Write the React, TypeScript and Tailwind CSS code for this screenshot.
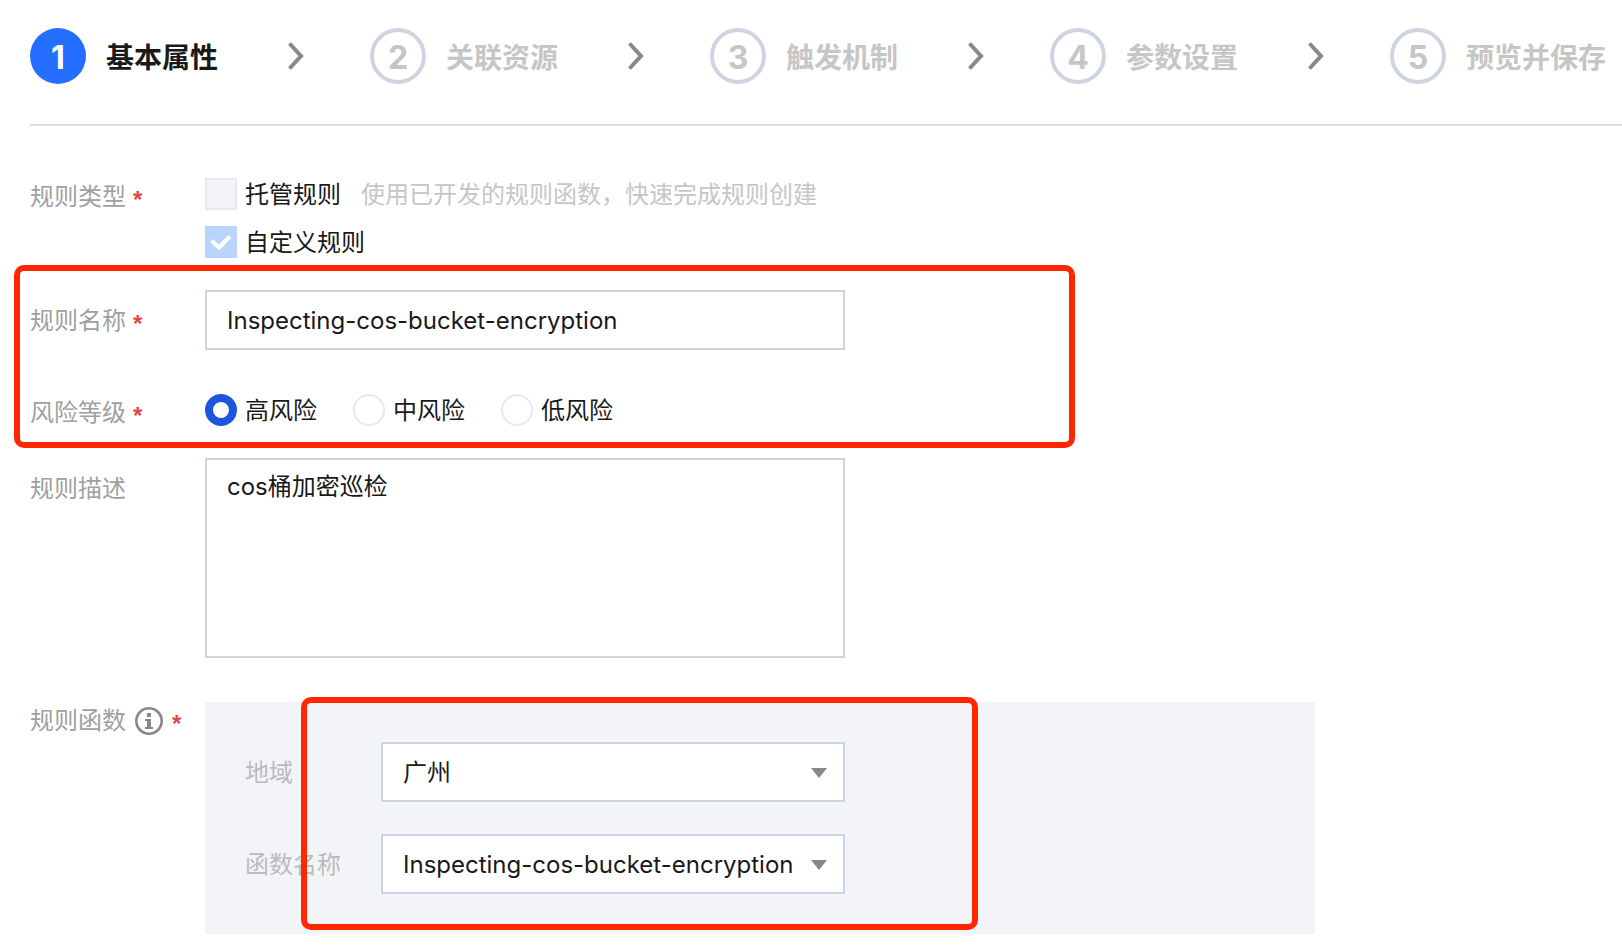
import { useState } from "react";
import type { ReactNode } from "react";

const steps = ["基本属性", "关联资源", "触发机制", "参数设置", "预览并保存"];
const risks = ["高风险", "中风险", "低风险"];

function Chevron() {
  return (
    <svg className="ml-[70px] mr-[66px] h-7 w-4 shrink-0" viewBox="0 0 16 28" aria-hidden="true">
      <path d="M1.5 1.5 L13 14 L1.5 26.5" fill="none" stroke="#888888" strokeWidth="4" />
    </svg>
  );
}

function Steps() {
  return (
    <ol className="flex items-center overflow-hidden border-b-2 border-[#dddddd] pt-7 pb-10">
      {steps.map((name, i) => (
        <li key={name} className="flex shrink-0 items-center" aria-current={i === 0 ? "step" : undefined}>
          <span
            className={
              i === 0
                ? "flex size-14 items-center justify-center rounded-full bg-[#246fff] pt-1 text-[32px] font-bold text-white"
                : "flex size-14 items-center justify-center rounded-full border-4 border-[#cfd5e0] pt-1 text-[32px] font-bold text-[#c6c6c6]"
            }
          >
            {i + 1}
          </span>
          <span
            className={
              i === 0
                ? "ml-5 pt-1 text-[28px] leading-10 font-bold text-[#191919]"
                : "ml-5 pt-1 text-[28px] leading-10 font-bold text-[#c6c6c6]"
            }
          >
            {name}
          </span>
          {i < steps.length - 1 && <Chevron />}
        </li>
      ))}
    </ol>
  );
}

function Star() {
  return (
    <span className="ml-[7px] pt-1.5 font-['Liberation_Sans',sans-serif] leading-6 font-bold text-[#e54545]">*</span>
  );
}

function InfoIcon() {
  return (
    <svg className="mr-0.5 ml-[9px] size-7" viewBox="0 0 28 28" aria-hidden="true">
      <circle cx="14" cy="14" r="12.7" fill="none" stroke="#888888" strokeWidth="2.6" />
      <path d="M12 6h4v4h-4z M10 12h6v8h2v2h-8v-2h2v-6h-2z" fill="#888888" />
    </svg>
  );
}

function CheckBox({ id, label, checked, hint }: { id: string; label: string; checked: boolean; hint?: string }) {
  return (
    <div className="flex h-8 items-center">
      <span className="relative size-8">
        <input
          id={id}
          type="checkbox"
          disabled
          checked={checked}
          readOnly
          className="block size-8 appearance-none border-2 border-[#e5e8f0] bg-[#f3f4f8] checked:border-[#bbd3ff] checked:bg-[#bbd3ff]"
        />
        {checked && (
          <svg className="absolute inset-0 size-8" viewBox="0 0 32 32" aria-hidden="true">
            <path d="M6.5 14.5 L14 21.5 L25 10.5" fill="none" stroke="#ffffff" strokeWidth="4" />
          </svg>
        )}
      </span>
      <label htmlFor={id} className="ml-2 pt-0.5">
        {label}
      </label>
      {hint && <span className="ml-5 pt-0.5 text-[#c6c6c6]">{hint}</span>}
    </div>
  );
}

function Select({ id, label, value }: { id: string; label: string; value: string }) {
  return (
    <div className="flex items-center">
      <label htmlFor={id} className="w-[136px] shrink-0 pt-0.5 text-[#bbbbbb]">
        {label}
      </label>
      <div className="relative w-[464px]">
        <select
          id={id}
          className="block h-[60px] w-full appearance-none border-2 border-[#cfd5e0] bg-white pt-0.5 pr-12 pl-5 outline-none"
        >
          <option>{value}</option>
        </select>
        <svg
          className="pointer-events-none absolute top-[26px] right-[18px] h-2.5 w-4"
          viewBox="0 0 16 10"
          aria-hidden="true"
        >
          <path d="M0 0h16L8 10z" fill="#888888" />
        </svg>
      </div>
    </div>
  );
}

function Row({ label, children }: { label: ReactNode; children: ReactNode }) {
  return (
    <div className="flex items-start">
      <div className="flex w-[175px] shrink-0 items-center leading-[38px] text-[#a0a0a0]">{label}</div>
      {children}
    </div>
  );
}

export default function App() {
  const [name, setName] = useState("Inspecting-cos-bucket-encryption");
  const [desc, setDesc] = useState("cos桶加密巡检");
  const [risk, setRisk] = useState(0);

  return (
    <main className="min-h-screen overflow-x-hidden bg-white pb-4 pl-[30px] font-['Inter','Noto_Sans_CJK_SC',sans-serif] text-[24px] leading-9 text-[#191919]">
      <Steps />

      <form className="pt-[52px]">
        <Row
          label={
            <>
              <span>规则类型</span>
              <Star />
            </>
          }
        >
          <div className="flex flex-col gap-4">
            <CheckBox id="managed" label="托管规则" checked={false} hint="使用已开发的规则函数，快速完成规则创建" />
            <CheckBox id="custom" label="自定义规则" checked />
          </div>
        </Row>

        <div className="relative mt-8">
          <Row
            label={
              <div className="flex h-[60px] items-center pt-0.5">
                <label htmlFor="name">规则名称</label>
                <Star />
              </div>
            }
          >
            <input
              id="name"
              type="text"
              value={name}
              onChange={(e) => setName(e.target.value)}
              className="h-[60px] w-[640px] border-2 border-[#cfd5e0] bg-white px-5 outline-none"
            />
          </Row>
          <div className="mt-11">
            <Row
              label={
                <>
                  <span id="risk-label">风险等级</span>
                  <Star />
                </>
              }
            >
              <div role="radiogroup" aria-labelledby="risk-label" className="flex gap-9">
                {risks.map((r, i) => (
                  <label key={r} className="flex h-8 items-center gap-2">
                    <input
                      type="radio"
                      name="risk"
                      checked={risk === i}
                      onChange={() => setRisk(i)}
                      className="size-8 appearance-none rounded-full border-2 border-[#e5e8f0] bg-white checked:border-8 checked:border-[#1d55dc]"
                    />
                    <span className="pt-0.5">{r}</span>
                  </label>
                ))}
              </div>
            </Row>
          </div>
          <div className="pointer-events-none absolute -top-[25px] -bottom-4 -left-4 w-[1061px] rounded-[10px] border-6 border-[#ff2600]" />
        </div>

        <div className="mt-[26px]">
          <Row
            label={
              <label htmlFor="desc" className="pt-3">
                规则描述
              </label>
            }
          >
            <textarea
              id="desc"
              value={desc}
              onChange={(e) => setDesc(e.target.value)}
              className="block h-[200px] w-[640px] resize-none border-2 border-[#cfd5e0] bg-white px-5 pt-[9px] outline-none"
            />
          </Row>
        </div>

        <div className="mt-11">
          <Row
            label={
              <>
                <span>规则函数</span>
                <InfoIcon />
                <Star />
              </>
            }
          >
            <div className="relative flex w-[1110px] flex-col gap-8 bg-[#f3f4f8] py-10 pl-10">
              <Select id="region" label="地域" value="广州" />
              <Select id="func" label="函数名称" value="Inspecting-cos-bucket-encryption" />
              <div className="pointer-events-none absolute -top-[5px] bottom-1 left-24 w-[677px] rounded-[10px] border-6 border-[#ff2600]" />
            </div>
          </Row>
        </div>
      </form>
    </main>
  );
}
